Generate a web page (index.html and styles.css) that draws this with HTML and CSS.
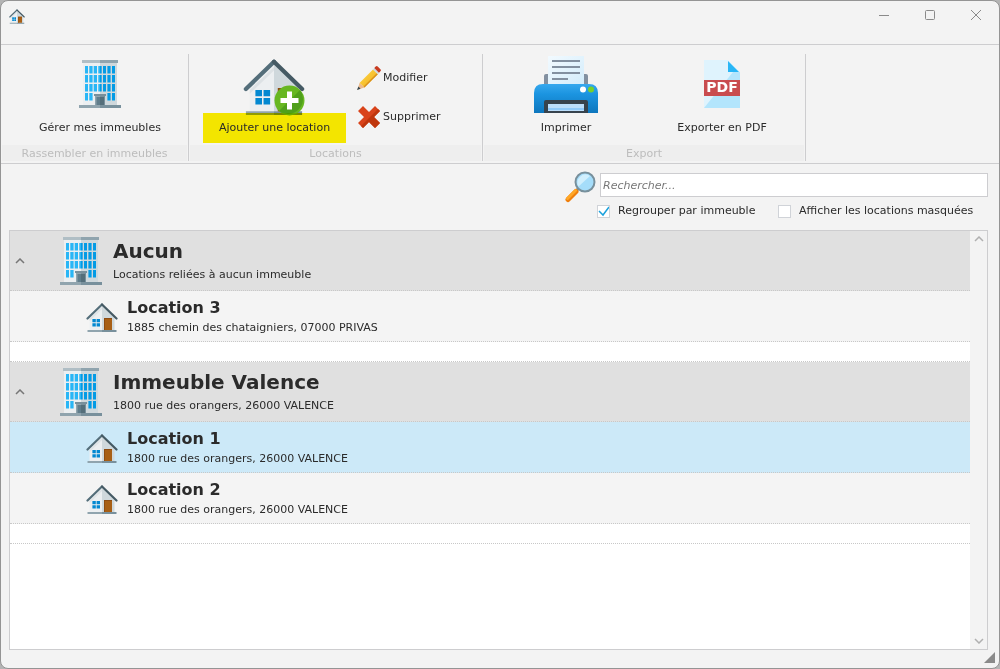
FILE: index.html
```html
<!DOCTYPE html>
<html lang="fr">
<head>
<meta charset="utf-8">
<meta name="viewport" content="width=device-width, initial-scale=1">
<title>Locations</title>
<link rel="stylesheet" href="styles.css">
</head>
<body>
<svg class="sprite" aria-hidden="true">
  <defs>
    <symbol id="building" viewBox="0 0 42 48">
      <path fill="#eceff1" d="M4 2h17v43H4z"/><path fill="#cfd8dc" d="M21 2h17v43H21z"/>
      <path fill="#b0bec5" d="M3 0h18v3H3z"/><path fill="#90a4ae" d="M21 0h18v3H21z"/>
      <path fill="#29b6f6" d="M6 6h3v7.500H6zM10.300 6h3.300v7.500h-3.300zM14.700 6h3.300v7.500h-3.300zM19.300 6H21v7.500h-1.700zM6 15h3v7.500H6zM10.300 15h3.300v7.500h-3.300zM14.700 15h3.300v7.500h-3.300zM19.300 15H21v7.500h-1.700zM6 24h3v7.500H6zM10.300 24h3.300v7.500h-3.300zM14.700 24h3.300v7.500h-3.300zM19.300 24H21v7.500h-1.700zM6 33h3v7.500H6zM10.300 33h3.300v7.500h-3.300z"/>
      <path fill="#039be5" d="M21 6h1.700v7.500H21zM24 6h3v7.500h-3zM28.400 6h3.200v7.500h-3.200zM33 6h3v7.500h-3zM21 15h1.700v7.500H21zM24 15h3v7.500h-3zM28.400 15h3.200v7.500h-3.200zM33 15h3v7.500h-3zM21 24h1.700v7.500H21zM24 24h3v7.500h-3zM28.400 24h3.200v7.500h-3.200zM33 24h3v7.500h-3zM28.400 33h3.200v7.500h-3.200zM33 33h3v7.500h-3z"/>
      <path fill="#90a4ae" d="M16 35h5v10h-5z"/><path fill="#78909c" d="M21 35h5v10h-5zM15 34h12v2H15z"/>
      <path fill="#607d8b" d="M17.500 37H21v8h-3.500z"/><path fill="#546e7a" d="M21 37h4v8h-4z"/>
      <path fill="#90a4ae" d="M0 45h21v3H0z"/><path fill="#78909c" d="M21 45h21v3H21z"/>
    </symbol>
    <symbol id="house" viewBox="0 0 32 29">
      <path fill="#eceff1" d="M3.500 14 16 2v25H3.500z"/><path fill="#cfd8dc" d="M16 2l12.500 12v13H16z"/>
      <path fill="#dde2e5" d="M3.500 16 16 4v2L3.500 18z"/>
      <path fill="#90a4ae" d="M1.500 27H16v2H1.500z"/><path fill="#78909c" d="M16 27h14.500v2H16z"/>
      <path fill="#a85f15" d="M18 15h8v12h-8z"/><path fill="#8d4c12" d="M18 15h8v1h-8zM18 15h1v12h-1z"/>
      <path fill="#0288d1" d="M6.400 16h3.400v3.300H6.400zM10.600 16H14v3.300h-3.400zM6.400 20.200h3.400v3.300H6.400zM10.600 20.200H14v3.300h-3.400z"/>
      <path fill="none" stroke="#546e7a" stroke-width="2.200" stroke-linecap="round" d="M1.500 15.500 16 1.500"/>
      <path fill="none" stroke="#455a64" stroke-width="2.200" stroke-linecap="round" d="M16 1.500 30.500 15.500"/>
    </symbol>
    <linearGradient id="printer-body" x2="0" y2="1"><stop offset="0" stop-color="#35a8ee"/><stop offset=".35" stop-color="#1b94e0"/><stop offset="1" stop-color="#0d76bd"/></linearGradient>
    <linearGradient id="paper" x2="1" y2="1"><stop offset="0" stop-color="#f2faff"/><stop offset="1" stop-color="#d2ecfb"/></linearGradient>
    <linearGradient id="pencil-body" x2="1" y2="1"><stop offset="0" stop-color="#ffdc47"/><stop offset="1" stop-color="#f0a91c"/></linearGradient>
  </defs>
</svg>

<div class="window">
  <header class="titlebar">
    <svg class="app-icon" role="img" aria-label="Locations"><use href="#house"/></svg>
    <div class="window-controls">
      <button type="button" aria-label="Réduire"><svg viewBox="0 0 12 12"><path d="M1 6.500h10"/></svg></button>
      <button type="button" aria-label="Agrandir"><svg viewBox="0 0 12 12"><rect x="1.500" y="1.500" width="9" height="9" rx="1"/></svg></button>
      <button type="button" aria-label="Fermer"><svg viewBox="0 0 12 12"><path d="M1 1l10 10M11 1 1 11"/></svg></button>
    </div>
  </header>

  <nav class="ribbon" aria-label="Actions">
    <section class="group group-buildings">
      <div class="group-actions">
        <button type="button" class="big-button">
          <span class="big-icon"><svg class="building"><use href="#building"/></svg></span>
          <span class="big-label">Gérer mes immeubles</span>
        </button>
      </div>
      <h2 class="group-name">Rassembler en immeubles</h2>
    </section>
    <section class="group group-rentals">
      <div class="group-actions">
        <button type="button" class="big-button">
          <span class="big-icon big-icon-house"><svg class="house-add" viewBox="0 0 64 58">
            <use href="#house" width="62" height="58"/>
            <circle cx="46.500" cy="42.500" r="15" fill="#67b721"/>
            <path fill="#50a01b" d="M57 32A15 15 0 0 1 36 53z"/>
            <path fill="#fff" d="M44 33.500h5v6.500h6.500v5H49v6.500h-5V45h-6.500v-5H44z"/>
          </svg></span>
          <span class="big-label highlighted">Ajouter une location</span>
        </button>
        <div class="small-buttons">
          <button type="button" class="small-button">
            <svg viewBox="0 0 24 24">
              <path fill="url(#pencil-body)" d="M2.500 17 16 3.500l4.800 4.800L7.500 21.500z"/>
              <path fill="#d9901a" d="M6.300 20.700 19.800 7.300l1 1L7.500 21.500z"/>
              <path fill="#edb98a" d="M2.500 17l5 4.500L.5 23.700z"/>
              <path fill="#37474f" d="M1.400 20.500 3.600 22.700 0 24z"/>
              <path fill="#cfd8dc" d="M16 3.500l1.500-1.500 4.800 4.800-1.500 1.500z"/>
              <path fill="#c83b20" d="M17.300 2 18.700.6q1-1 2 0l2.700 2.700q1 1 0 2L22 6.700z"/>
            </svg>
            <span>Modifier</span>
          </button>
          <button type="button" class="small-button">
            <svg viewBox="0 0 24 24">
              <path fill="#d9431a" d="M1 6 6 1l6 6 6-6 5 5-6 6 6 6-5 5-6-6-6 6-5-5 6-6z"/>
              <path fill="#bf360c" d="M21 4l2 2-6 6 6 6-5 5-6-6-6 6-2-2z"/>
            </svg>
            <span>Supprimer</span>
          </button>
        </div>
      </div>
      <h2 class="group-name">Locations</h2>
    </section>
    <section class="group group-export">
      <div class="group-actions">
        <button type="button" class="big-button">
          <span class="big-icon big-icon-printer"><svg class="printer" viewBox="0 0 64 57">
            <rect x="10" y="18" width="44" height="14" rx="2" fill="#8290a0"/>
            <path fill="url(#paper)" d="M14 0h36v30H14z"/>
            <path fill="#8290a0" d="M18 4h28v2H18zM18 10h28v2H18zM18 16h28v2H18zM18 22h16v2H18z"/>
            <path fill="url(#printer-body)" d="M0 57V37q0-9 9-9h46q9 0 9 9v20z"/>
            <circle cx="49" cy="33.500" r="3" fill="#fff"/><circle cx="57" cy="33.500" r="3" fill="#76d12b"/>
            <path fill="#37434d" d="M10 57V46q0-2 2-2h40q2 0 2 2v11z"/>
            <path fill="#bbdefb" d="M14 48h36v7H14z"/><path fill="#90caf9" d="M14 52h36v2H14z"/>
          </svg></span>
          <span class="big-label">Imprimer</span>
        </button>
        <button type="button" class="big-button">
          <span class="big-icon"><svg class="pdf" viewBox="0 0 38 48">
            <path fill="#dff3fd" d="M1 0h24l12 12v36H1z"/>
            <path fill="#b3e5fc" d="M37 12v36H1l29-36z"/>
            <path fill="#29b6f6" d="M25 1v11h11z"/>
            <path fill="#c94c4f" d="M1 20h36v16H1z"/>
            <text x="19" y="32" text-anchor="middle">PDF</text>
          </svg></span>
          <span class="big-label">Exporter en PDF</span>
        </button>
      </div>
      <h2 class="group-name">Export</h2>
    </section>
  </nav>

  <main class="content">
    <form class="search">
      <svg class="magnifier" viewBox="0 0 32 32" aria-hidden="true">
        <path stroke="#78909c" stroke-width="3" d="M12 20l3-3"/>
        <path stroke="#ef7f0c" stroke-width="5" stroke-linecap="round" d="M4 28.500l8-8"/>
        <path stroke="#ffa726" stroke-width="3" stroke-linecap="round" d="M3.500 27.500l8-8"/>
        <circle cx="21" cy="11" r="9.500" fill="#a5ddfa" stroke="#78909c" stroke-width="2"/>
        <path fill="#d1effd" d="M14.500 15.500A8 8 0 0 1 26 5z"/>
      </svg>
      <div class="search-fields">
        <input class="search-input" type="search" placeholder="Rechercher..." aria-label="Rechercher">
        <div class="options">
          <label class="option"><input type="checkbox" checked><span>Regrouper par immeuble</span></label>
          <label class="option"><input type="checkbox"><span>Afficher les locations masquées</span></label>
        </div>
      </div>
    </form>

    <div class="list">
      <div class="rows">
        <section>
          <header class="building-row">
            <button type="button" class="toggle" aria-label="Replier Aucun" aria-expanded="true"><svg viewBox="0 0 10 6"><path d="M1 5l4-4 4 4"/></svg></button>
            <svg class="building"><use href="#building"/></svg>
            <div><h3>Aucun</h3><p>Locations reliées à aucun immeuble</p></div>
          </header>
          <ul>
            <li class="rental"><svg class="house"><use href="#house"/></svg><div><h4>Location 3</h4><p>1885 chemin des chataigniers, 07000 PRIVAS</p></div></li>
          </ul>
        </section>
        <section>
          <header class="building-row">
            <button type="button" class="toggle" aria-label="Replier Immeuble Valence" aria-expanded="true"><svg viewBox="0 0 10 6"><path d="M1 5l4-4 4 4"/></svg></button>
            <svg class="building"><use href="#building"/></svg>
            <div><h3>Immeuble Valence</h3><p>1800 rue des orangers, 26000 VALENCE</p></div>
          </header>
          <ul>
            <li class="rental selected"><svg class="house"><use href="#house"/></svg><div><h4>Location 1</h4><p>1800 rue des orangers, 26000 VALENCE</p></div></li>
            <li class="rental"><svg class="house"><use href="#house"/></svg><div><h4>Location 2</h4><p>1800 rue des orangers, 26000 VALENCE</p></div></li>
          </ul>
        </section>
      </div>
      <div class="scrollbar">
        <button type="button" aria-label="Défiler vers le haut"><svg viewBox="0 0 10 6"><path d="M1 5l4-4 4 4"/></svg></button>
        <button type="button" aria-label="Défiler vers le bas"><svg viewBox="0 0 10 6"><path d="M1 1l4 4 4-4"/></svg></button>
      </div>
    </div>
  </main>
  <svg class="grip" viewBox="0 0 11 11" aria-hidden="true"><path d="M11 0v11H0z"/></svg>
</div>
</body>
</html>
```
FILE: styles.css
```css
* { box-sizing: border-box; }

body {
  margin: 0;
  background: #b4b4b4;
  color: #2b2b2b;
  font: 11px/14px Verdana, "DejaVu Sans", sans-serif;
}

h2, h3, h4, p, ul { margin: 0; padding: 0; }
ul { list-style: none; }
svg { display: block; flex: none; }

button {
  margin: 0;
  padding: 0;
  border: 0;
  background: none;
  color: inherit;
  font: inherit;
}

.sprite { position: absolute; width: 0; height: 0; }

.window {
  position: relative;
  display: flex;
  flex-direction: column;
  min-height: 100vh;
  border: 1px solid #949494;
  border-radius: 8px;
  background: #f3f3f3;
  overflow: hidden;
}

.titlebar {
  display: flex;
  justify-content: space-between;
  align-items: flex-start;
  height: 44px;
  padding-left: 8px;
  border-bottom: 1px solid #cdcdcf;
}

.app-icon { width: 16px; height: 15px; margin-top: 8px; }
.window-controls { display: flex; }
.window-controls button {
  display: grid;
  place-items: center;
  width: 46px;
  height: 28px;
}
.window-controls svg {
  width: 12px;
  height: 12px;
  fill: none;
  stroke: #8a8a8a;
}

.ribbon {
  display: flex;
  height: 119px;
  padding: 9px 0 2px;
  border-bottom: 1px solid #cdcdcf;
}

.group {
  display: flex;
  flex-direction: column;
  justify-content: space-between;
  border-right: 1px solid #cdcdcf;
}
.group-buildings { width: 188px; }
.group-rentals { width: 294px; }
.group-export { width: 323px; }

.group-actions { display: flex; }
.group-buildings .group-actions { padding-left: 21px; }
.group-rentals .group-actions { padding-left: 14px; gap: 11px; }
.group-export .group-actions { padding-left: 5px; }

.group-name {
  height: 16px;
  margin: 0 1px;
  background: #eee;
  color: #bdbdbd;
  font-size: 11px;
  font-weight: 400;
  line-height: 18px;
  text-align: center;
}

.big-button {
  display: flex;
  flex-direction: column;
  width: 156px;
}
.group-rentals .big-button { width: 143px; }

.big-icon {
  display: grid;
  place-items: center;
  align-self: center;
  height: 59px;
}
.big-icon-house { align-items: start; padding-top: 4px; }
.big-icon-printer { align-items: end; }
.big-label { width: 100%; height: 30px; line-height: 29px; }
.highlighted { background: #fff100; mix-blend-mode: multiply; }

.building { width: 42px; height: 48px; }
.house { width: 32px; height: 29px; }
.house-add { width: 64px; height: 58px; }
.printer { width: 64px; height: 57px; }
.pdf { width: 38px; height: 48px; }
.pdf text { fill: #fff; font: bold 14px "DejaVu Sans", sans-serif; }

.small-buttons {
  display: flex;
  flex-direction: column;
  gap: 15px;
  padding-top: 12px;
}
.small-button { display: flex; align-items: center; gap: 2px; }
.small-button svg { width: 24px; height: 24px; }
.small-button span { line-height: 16px; }

.content {
  flex: 1;
  display: flex;
  flex-direction: column;
  padding: 7px 11px 18px 8px;
}

.search {
  display: flex;
  align-self: flex-end;
  gap: 4px;
  width: 424px;
  height: 59px;
}
.magnifier { width: 32px; height: 32px; fill: none; }
.search-fields { flex: 1; padding-top: 2px; }

.search-input {
  display: block;
  width: 100%;
  height: 24px;
  padding: 0 2px;
  border: 1px solid #cdcdd0;
  background: #fff;
  font: inherit;
  appearance: none;
}
.search-input::placeholder { color: #777; font-style: italic; opacity: 1; }

.options {
  display: grid;
  grid-template-columns: 181px 1fr;
  margin-left: -3px;
  padding-top: 6px;
}
.option { display: flex; align-items: center; gap: 8px; }
.option span { line-height: 16px; }
.option input {
  width: 13px;
  height: 13px;
  margin: 0;
  border: 1px solid #d0d3d8;
  background: #fff;
  appearance: none;
}
.option input:checked {
  background: #fff url("data:image/svg+xml,%3Csvg xmlns='http://www.w3.org/2000/svg' viewBox='0 0 11 11'%3E%3Cpath d='M1 5l4 4 6-8' fill='none' stroke='%231ba1dc' stroke-width='1.500'/%3E%3C/svg%3E");
}

.list {
  flex: 1;
  display: flex;
  border: 1px solid #cdcdcf;
  background: #fff;
}
.rows { flex: 1; }
.rows section { padding-bottom: 19px; border-bottom: 1px dotted #c8c8c8; }

.building-row {
  display: flex;
  height: 60px;
  padding-top: 6px;
  border-bottom: 1px dotted #c8c8c8;
  background: #e0e0e0;
}
.building-row .building { margin-right: 11px; }
.building-row h3 { font-size: 20px; line-height: 28px; }
.building-row p { line-height: 20px; }

.toggle {
  display: grid;
  place-items: center;
  width: 19px;
  height: 48px;
  margin-right: 31px;
}
.toggle svg, .scrollbar svg {
  width: 10px;
  height: 6px;
  fill: none;
  stroke: #777;
  stroke-width: 1.500;
}

.rental {
  display: flex;
  height: 51px;
  padding: 6px 0 0 76px;
  gap: 9px;
  border-bottom: 1px dotted #c8c8c8;
  background: #f4f4f4;
}
.rental.selected { background: #cce9f8; }
.rental .house { margin-top: 6px; }
.rental h4 { font-size: 16px; line-height: 21px; }
.rental p { line-height: 20px; }

.scrollbar {
  display: flex;
  flex-direction: column;
  justify-content: space-between;
  width: 17px;
  background: #f3f3f3;
}
.scrollbar button { display: grid; place-items: center; height: 16px; }
.scrollbar svg { stroke: #b0b0b0; }

.grip {
  position: absolute;
  right: 4px;
  bottom: 5px;
  width: 11px;
  height: 11px;
  fill: #8a8a8a;
}
```
